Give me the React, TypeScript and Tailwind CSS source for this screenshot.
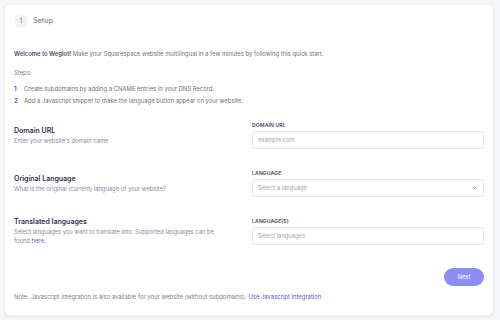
import React from "react";

const rows = [
	{
		title: "Domain URL",
		desc: <>Enter your website's domain name</>,
		label: "Domain URL",
		placeholder: "example.com",
		select: false,
	},
	{
		title: "Original Language",
		desc: <>What is the original (current) language of your website?</>,
		label: "Language",
		placeholder: "Select a language",
		select: true,
	},
	{
		title: "Translated languages",
		desc: (
			<>
				Select languages you want to translate into. Supported languages can be
				found <a className="text-[#5457e0]">here</a>.
			</>
		),
		label: "Language(s)",
		placeholder: "Select languages",
		select: false,
	},
];

function App() {
	return (
		<div
			className="w-[500px] h-[320px] bg-[#f4f6fa] p-[4px] overflow-hidden"
			style={{ fontFamily: "Inter, 'Liberation Sans', sans-serif" }}
		>
			<div className="w-[490px] h-[312px] bg-white rounded-[6px] border border-[#eef0f4] shadow-[0_1px_2px_rgba(30,40,80,0.08)] px-[9px] pt-[9px]">
				<div className="flex items-center gap-[5px] h-[14px]">
					<span className="flex items-center justify-center w-[14px] h-[14px] rounded-full bg-[#f3f4f7] text-[5.8px] text-[#555770]">
						1
					</span>
					<span className="text-[7.2px] text-[#6b6d80]">Setup</span>
				</div>

				<p className="mt-[21px] text-[5.9px] leading-[10px] text-[#6f7182]">
					<span className="font-semibold text-[#4a4c63]">Welcome to Weglot!</span>{" "}
					Make your Squarespace website multilingual in a few minutes by following this
					quick start.
				</p>
				<p className="mt-[9px] text-[5.9px] leading-[10px] text-[#7d7f90]">Steps:</p>
				<ol className="mt-[6px] flex flex-col gap-[2px] text-[5.9px] leading-[10px] text-[#6f7182]">
					<li className="flex gap-[6px]">
						<span className="w-[4px] font-bold text-[#5457e0]">1</span>
						Create subdomains by adding a CNAME entries in your DNS Record.
					</li>
					<li className="flex gap-[6px]">
						<span className="w-[4px] font-bold text-[#5457e0]">2</span>
						Add a Javascript snippet to make the language button appear on your website.
					</li>
				</ol>

				<div className="mt-[15px] flex flex-col gap-[20px]">
					{rows.map((row) => (
						<div key={row.title} className="flex items-center justify-between">
							<div className="w-[212px]">
								<h3 className="text-[7px] leading-[10px] font-semibold text-[#2d2f4e]">
									{row.title}
								</h3>
								<p className="text-[5.8px] leading-[9px] text-[#8a8c9c]">{row.desc}</p>
							</div>
							<div className="w-[232px]">
								<div className="text-[5.1px] leading-[8px] font-bold uppercase tracking-[0.02em] text-[#5a5c6e]">
									{row.label}
								</div>
								<div className="mt-[2px] h-[18px] rounded-[3px] border border-[#e7e8ee] flex items-center justify-between pl-[5px] pr-[6px] text-[5.8px] text-[#a3a5b2]">
									{row.placeholder}
									{row.select && (
										<svg width="5" height="4" viewBox="0 0 10 8" fill="none">
											<path d="M2 2l3 3 3-3" stroke="#8a8c9c" strokeWidth="1.6" strokeLinecap="round" strokeLinejoin="round" />
										</svg>
									)}
								</div>
							</div>
						</div>
					))}
				</div>

				<div className="mt-[23px] flex justify-end">
					<button className="w-[40px] h-[18px] rounded-full bg-[#8b8ef7] text-white text-[5.9px]">
						Next
					</button>
				</div>

				<p className="mt-[6px] text-[5.9px] leading-[10px] text-[#7d7f90]">
					Note: Javascript integration is also available for your website (without subdomains).{" "}
					<a className="text-[#5457e0]">Use Javascript integration</a>
				</p>
			</div>
		</div>
	);
}

export default App;
